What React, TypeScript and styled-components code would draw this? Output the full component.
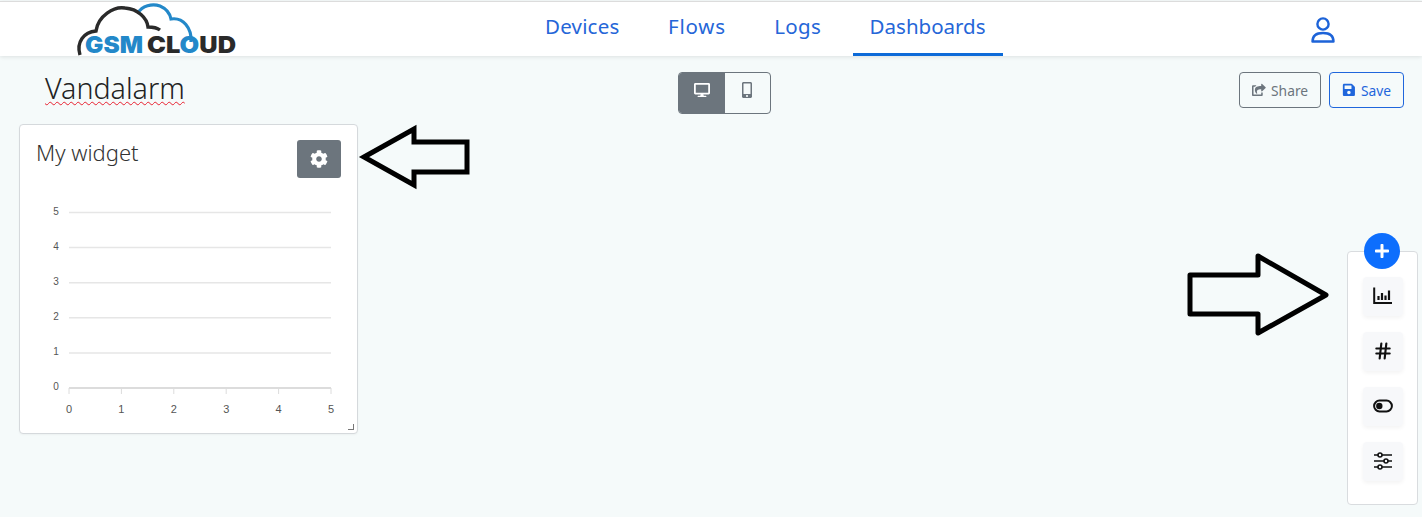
import React from "react";
import styled, { createGlobalStyle } from "styled-components";
import { FaCog, FaDesktop, FaMobileAlt, FaPlus, FaSave, FaShareSquare } from "react-icons/fa";
import { LuHash } from "react-icons/lu";

const GlobalStyle = createGlobalStyle`
  html, body {
    margin: 0;
    height: 100%;
    overflow: hidden;
    background: #f5fafa;
    font-family: "Noto Sans", "Open Sans", sans-serif;
  }
`;

const Page = styled.div`
  position: relative;
  height: 517px;
  overflow: hidden;
`;

const TopBar = styled.header`
  display: flex;
  align-items: stretch;
  height: 54px;
  margin-top: 1px;
  padding-left: 76px;
  background: #fff;
  border-top: 1px solid #dcdcdc;
  box-shadow: 0 1px 4px rgba(0, 0, 0, 0.1);
`;

const LogoBox = styled.div`
  width: 162px;
  height: 54px;

  svg {
    overflow: visible;
  }
`;

const Nav = styled.nav`
  display: flex;
  margin-left: 290px;
  gap: 14.5px;
`;

const NavLink = styled.a<{ $active?: boolean; $track?: number }>`
  box-sizing: border-box;
  display: flex;
  align-items: center;
  height: 54px;
  padding: 0 17px 4px;
  font-size: 20.5px;
  letter-spacing: ${(p) => p.$track ?? 0}px;
  color: #2566d8;
  border-bottom: 3px solid ${(p) => (p.$active ? "#0d6ad8" : "transparent")};
`;

const UserLink = styled.a`
  display: flex;
  align-items: center;
  margin-left: 307px;
  padding-top: 2px;
  color: #1d63d8;
`;

const Toolbar = styled.div`
  display: flex;
  align-items: flex-start;
  padding: 16px 18px 0 45px;
`;

const Title = styled.h1`
  width: 633px;
  margin: 0;
  font-size: 28.6px;
  line-height: 32px;
  font-weight: 300;
  color: #222;
  text-decoration: underline wavy #e8202f 1.4px;
  text-underline-offset: 2px;
  text-decoration-skip-ink: none;
`;

const Segment = styled.div`
  display: flex;
  width: 93px;
  height: 42px;
  border: 1px solid #6c757d;
  border-radius: 4px;
  overflow: hidden;
  box-sizing: border-box;
`;

const SegmentButton = styled.button<{ $active?: boolean }>`
  display: flex;
  align-items: flex-start;
  justify-content: center;
  flex: 1;
  padding: 9px 0 0;
  border: 0;
  font-size: 16px;
  background: ${(p) => (p.$active ? "#6c757d" : "transparent")};
  color: ${(p) => (p.$active ? "#fff" : "#6c757d")};
`;

const Actions = styled.div`
  display: flex;
  gap: 8px;
  margin-left: auto;
`;

const OutlineButton = styled.button<{ $color: string }>`
  display: flex;
  align-items: center;
  gap: 5px;
  height: 36px;
  padding: 0 12px;
  background: transparent;
  border: 1px solid ${(p) => p.$color};
  border-radius: 4px;
  color: ${(p) => p.$color};
  font: 400 13.8px "Noto Sans", sans-serif;
`;

const WidgetCard = styled.section`
  box-sizing: border-box;
  position: relative;
  width: 339px;
  height: 310px;
  margin: 10px 0 0 19px;
  background: #fff;
  border: 1px solid #d5d9dc;
  border-radius: 4px;
  box-shadow: 0 1px 2px rgba(0, 0, 0, 0.04);
`;

const WidgetHead = styled.div`
  display: flex;
  justify-content: space-between;
  padding: 15px 16px 0;
`;

const WidgetTitle = styled.h2`
  margin: 0;
  font-size: 22px;
  line-height: 24px;
  font-weight: 300;
  color: #333;
`;

const GearButton = styled.button`
  display: flex;
  align-items: center;
  justify-content: center;
  width: 44px;
  height: 38px;
  border: 0;
  border-radius: 3px;
  background: #6c757d;
  color: #fff;
  font-size: 18px;
`;

const ResizeHandle = styled.span`
  position: absolute;
  right: 3px;
  bottom: 3px;
  width: 5px;
  height: 5px;
  border-right: 1px solid #777;
  border-bottom: 1px solid #777;
`;

const ChartSvg = styled.svg`
  display: block;
  margin-top: 12px;
`;

const Dock = styled.aside`
  position: absolute;
  top: 251px;
  left: 1347px;
  box-sizing: border-box;
  width: 71px;
  height: 254px;
  display: flex;
  flex-direction: column;
  align-items: center;
  gap: 16px;
  padding-top: 25px;
  background: #fff;
  border: 1px solid #d9dcdf;
  border-radius: 4px;
`;

const AddButton = styled.button`
  position: absolute;
  top: -19px;
  left: 16px;
  width: 36px;
  height: 36px;
  display: flex;
  align-items: center;
  justify-content: center;
  padding: 0;
  border: 0;
  border-radius: 50%;
  background: #0d6efd;
  color: #fff;
  font-size: 16px;
`;

const DockButton = styled.button`
  display: flex;
  align-items: center;
  justify-content: center;
  width: 40px;
  height: 39px;
  padding: 0 0 2px;
  border: 0;
  border-radius: 4px;
  background: #f7f8fa;
  box-shadow: 0 2px 4px rgba(0, 0, 0, 0.05);
  color: #111;
`;

const Arrow = styled.svg<{ $left: number; $top: number }>`
  position: absolute;
  left: ${(p) => p.$left}px;
  top: ${(p) => p.$top}px;
`;

const Logo = () => (
  <svg width="162" height="54" viewBox="76 2 162 54">
    <path
      d="M138 13C142 6 152 3 160 6C167 9 170 14 171 19C183 17 192 28 191 42"
      fill="none"
      stroke="#2388c9"
      strokeWidth="3.2"
    />
    <path
      d="M80 55C76 42 84 32 96 31C98 16 114 6 125 8C138 9 147 18 148 27C152 27 156 27 160 30"
      fill="none"
      stroke="#2a2a2a"
      strokeWidth="3.4"
    />
    <text x="85" y="53" fontFamily="Inter, sans-serif" fontWeight="900" fontSize="23" fill="#2388c9" textLength="58" lengthAdjust="spacingAndGlyphs">
      GSM
    </text>
    <text x="147" y="53" fontFamily="Inter, sans-serif" fontWeight="900" fontSize="23" fill="#2a2a2a" textLength="89" lengthAdjust="spacingAndGlyphs">
      CL<tspan fill="#2388c9">O</tspan>UD
    </text>
  </svg>
);

const UserIcon = () => (
  <svg width="26" height="28" viewBox="0 0 26 28" fill="none" stroke="currentColor" strokeWidth="2.4">
    <circle cx="13" cy="8" r="5.6" />
    <path d="M2.5 25.5C2.5 19.5 7 17 13 17C19 17 23.5 19.5 23.5 25.5Z" strokeLinejoin="round" />
  </svg>
);

const BarsIcon = () => (
  <svg width="20" height="18" viewBox="0 0 20 18" fill="none" stroke="currentColor">
    <path d="M1.2 0.5V16H19" strokeWidth="2" />
    <path d="M5.5 13V9M9 13V6M12.5 13V8.5M16 13V3.5" strokeWidth="2.2" />
  </svg>
);

const ToggleIcon = () => (
  <svg width="20" height="14" viewBox="0 0 20 14" fill="none">
    <rect x="1.1" y="1.6" width="17.8" height="10.8" rx="5.4" stroke="currentColor" strokeWidth="2" />
    <circle cx="6.3" cy="7" r="3.2" fill="currentColor" />
  </svg>
);

const SlidersIcon = () => (
  <svg width="20" height="18" viewBox="0 0 20 18" fill="#f7f8fa" stroke="currentColor" strokeWidth="1.6">
    <path d="M1 3H19M1 9H19M1 15H19" />
    <circle cx="7" cy="3" r="2" />
    <circle cx="13" cy="9" r="2" />
    <circle cx="7" cy="15" r="2" />
  </svg>
);

const yTicks = [5, 4, 3, 2, 1, 0];
const xTicks = [0, 1, 2, 3, 4, 5];

const Chart = () => (
  <ChartSvg width="337" height="242" viewBox="20 190 337 242">
    {yTicks.map((v, i) => {
      const y = 212.5 + i * 35.1;
      return (
        <g key={v}>
          <line x1="69" x2="331" y1={y} y2={y} stroke={v === 0 ? "#dcdcdc" : "#e6e6e6"} strokeWidth={v === 0 ? 2 : 1.5} />
          <text x="56" y={y + 2} fontFamily="Liberation Sans, sans-serif" fontSize="10" fill="#555" textAnchor="middle">
            {v}
          </text>
        </g>
      );
    })}
    {xTicks.map((v, i) => {
      const x = 69 + i * 52.4;
      return (
        <g key={v}>
          <line x1={x} x2={x} y1="388" y2="394" stroke="#dcdcdc" />
          <text x={x} y="413" fontFamily="Liberation Sans, sans-serif" fontSize="11" fill="#555" textAnchor="middle">
            {v}
          </text>
        </g>
      );
    })}
  </ChartSvg>
);

const App: React.FC = () => (
  <Page>
    <GlobalStyle />
    <TopBar>
      <LogoBox>
        <Logo />
      </LogoBox>
      <Nav>
        <NavLink $track={0.2}>Devices</NavLink>
        <NavLink $track={0.8}>Flows</NavLink>
        <NavLink $track={0.3}>Logs</NavLink>
        <NavLink $active>Dashboards</NavLink>
      </Nav>
      <UserLink>
        <UserIcon />
      </UserLink>
    </TopBar>
    <Toolbar>
      <Title>Vandalarm</Title>
      <Segment>
        <SegmentButton $active>
          <FaDesktop />
        </SegmentButton>
        <SegmentButton>
          <FaMobileAlt />
        </SegmentButton>
      </Segment>
      <Actions>
        <OutlineButton $color="#6c757d">
          <FaShareSquare />
          Share
        </OutlineButton>
        <OutlineButton $color="#1f66dc">
          <FaSave />
          Save
        </OutlineButton>
      </Actions>
    </Toolbar>
    <WidgetCard>
      <WidgetHead>
        <WidgetTitle>My widget</WidgetTitle>
        <GearButton>
          <FaCog />
        </GearButton>
      </WidgetHead>
      <Chart />
      <ResizeHandle />
    </WidgetCard>
    <Arrow $left={358} $top={124} width="114" height="66" viewBox="358 124 114 66" fill="none" stroke="#000" strokeWidth="5">
      <path d="M364 157L414 129V142H467V172H414V185Z" />
    </Arrow>
    <Arrow $left={1186} $top={253} width="146" height="84" viewBox="1186 253 146 84" fill="none" stroke="#000" strokeWidth="5" strokeLinejoin="round">
      <path d="M1190 275H1258V256L1326 295L1258 333V314H1190Z" />
    </Arrow>
    <Dock>
      <AddButton>
        <FaPlus />
      </AddButton>
      <DockButton>
        <BarsIcon />
      </DockButton>
      <DockButton>
        <LuHash size={20} strokeWidth={2.6} />
      </DockButton>
      <DockButton>
        <ToggleIcon />
      </DockButton>
      <DockButton>
        <SlidersIcon />
      </DockButton>
    </Dock>
  </Page>
);

export default App;
